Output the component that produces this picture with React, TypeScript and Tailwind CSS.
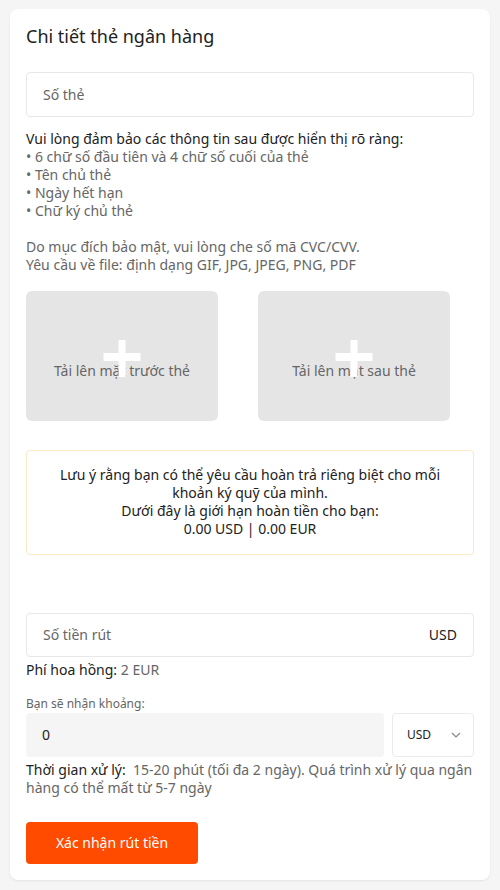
const font = { fontFamily: '"Noto Sans", "Open Sans", sans-serif' };

function UploadBox({ label }: { label: string }) {
  return (
    <div className="relative flex h-[130px] w-[192px] items-center justify-center rounded-md bg-[#e5e5e5]">
      <span className="mt-[30px] text-sm text-[#666]">{label}</span>
      <div className="absolute left-1/2 top-[49px] h-[37px] w-[7px] -translate-x-1/2 bg-white" />
      <div className="absolute left-1/2 top-[62px] h-[8px] w-[37px] -translate-x-1/2 bg-white" />
    </div>
  );
}

export default function App() {
  return (
    <div className="min-h-[890px] bg-[#f5f5f5] pt-[9px]" style={font}>
      <div className="mx-[10px] rounded-lg bg-white px-4 pb-4 pt-[15px] shadow-[0_1px_2px_rgba(0,0,0,0.08)]">
        <h1 className="text-lg leading-6 text-[#222]">Chi tiết thẻ ngân hàng</h1>

        <div className="mt-6 flex h-[45px] items-center rounded border border-[#e8e8e8] px-4 text-sm text-[#666]">
          Số thẻ
        </div>

        <div className="mt-[13px] text-sm leading-[18px] text-[#666]">
          <p className="text-[#222]">Vui lòng đảm bảo các thông tin sau được hiển thị rõ ràng:</p>
          <p>• 6 chữ số đầu tiên và 4 chữ số cuối của thẻ</p>
          <p>• Tên chủ thẻ</p>
          <p>• Ngày hết hạn</p>
          <p>• Chữ ký chủ thẻ</p>
          <p className="mt-[18px]">Do mục đích bảo mật, vui lòng che số mã CVC/CVV.</p>
          <p>Yêu cầu về file: định dạng GIF, JPG, JPEG, PNG, PDF</p>
        </div>

        <div className="mt-[17px] flex gap-10">
          <UploadBox label="Tải lên mặt trước thẻ" />
          <UploadBox label="Tải lên mặt sau thẻ" />
        </div>

        <div className="mt-[29px] rounded border border-[#fde9c4] px-6 pb-4 pt-[15px] text-center text-sm leading-[18px] text-[#222]">
          <p>Lưu ý rằng bạn có thể yêu cầu hoàn trả riêng biệt cho mỗi khoản ký quỹ của mình.</p>
          <p>Dưới đây là giới hạn hoàn tiền cho bạn:</p>
          <p>0.00 USD | 0.00 EUR</p>
        </div>

        <div className="mt-[58px] flex h-[44px] items-center justify-between rounded border border-[#e8e8e8] px-4 text-sm">
          <span className="text-[#666]">Số tiền rút</span>
          <span className="text-[#222]">USD</span>
        </div>
        <p className="mt-1 text-sm leading-[18px] text-[#222]">
          Phí hoa hồng: <span className="text-[#666]">2 EUR</span>
        </p>

        <p className="mt-[17px] text-xs leading-4 text-[#666]">Bạn sẽ nhận khoảng:</p>
        <div className="mt-px flex h-[44px] gap-2">
          <div className="flex flex-1 items-center rounded bg-[#f5f5f5] px-4 text-sm text-[#222]">0</div>
          <div className="flex w-[82px] items-center justify-between rounded border border-[#ebebeb] pl-[14px] pr-3 text-xs text-[#222]">
            <span>USD</span>
            <svg width="10" height="6" viewBox="0 0 10 6" fill="none" stroke="#888" strokeWidth="1.2">
              <path d="M1 1l4 4 4-4" />
            </svg>
          </div>
        </div>
        <p className="mt-1 text-sm leading-[18px] text-[#666]">
          <span className="text-[#222]">Thời gian xử lý:</span>&nbsp; 15-20 phút (tối đa 2 ngày). Quá trình xử lý qua ngân hàng có thể mất từ 5-7 ngày
        </p>

        <button className="mt-[25px] h-[42px] w-[172px] rounded bg-[#ff4b00] text-sm text-white">
          Xác nhận rút tiền
        </button>
      </div>
    </div>
  );
}
